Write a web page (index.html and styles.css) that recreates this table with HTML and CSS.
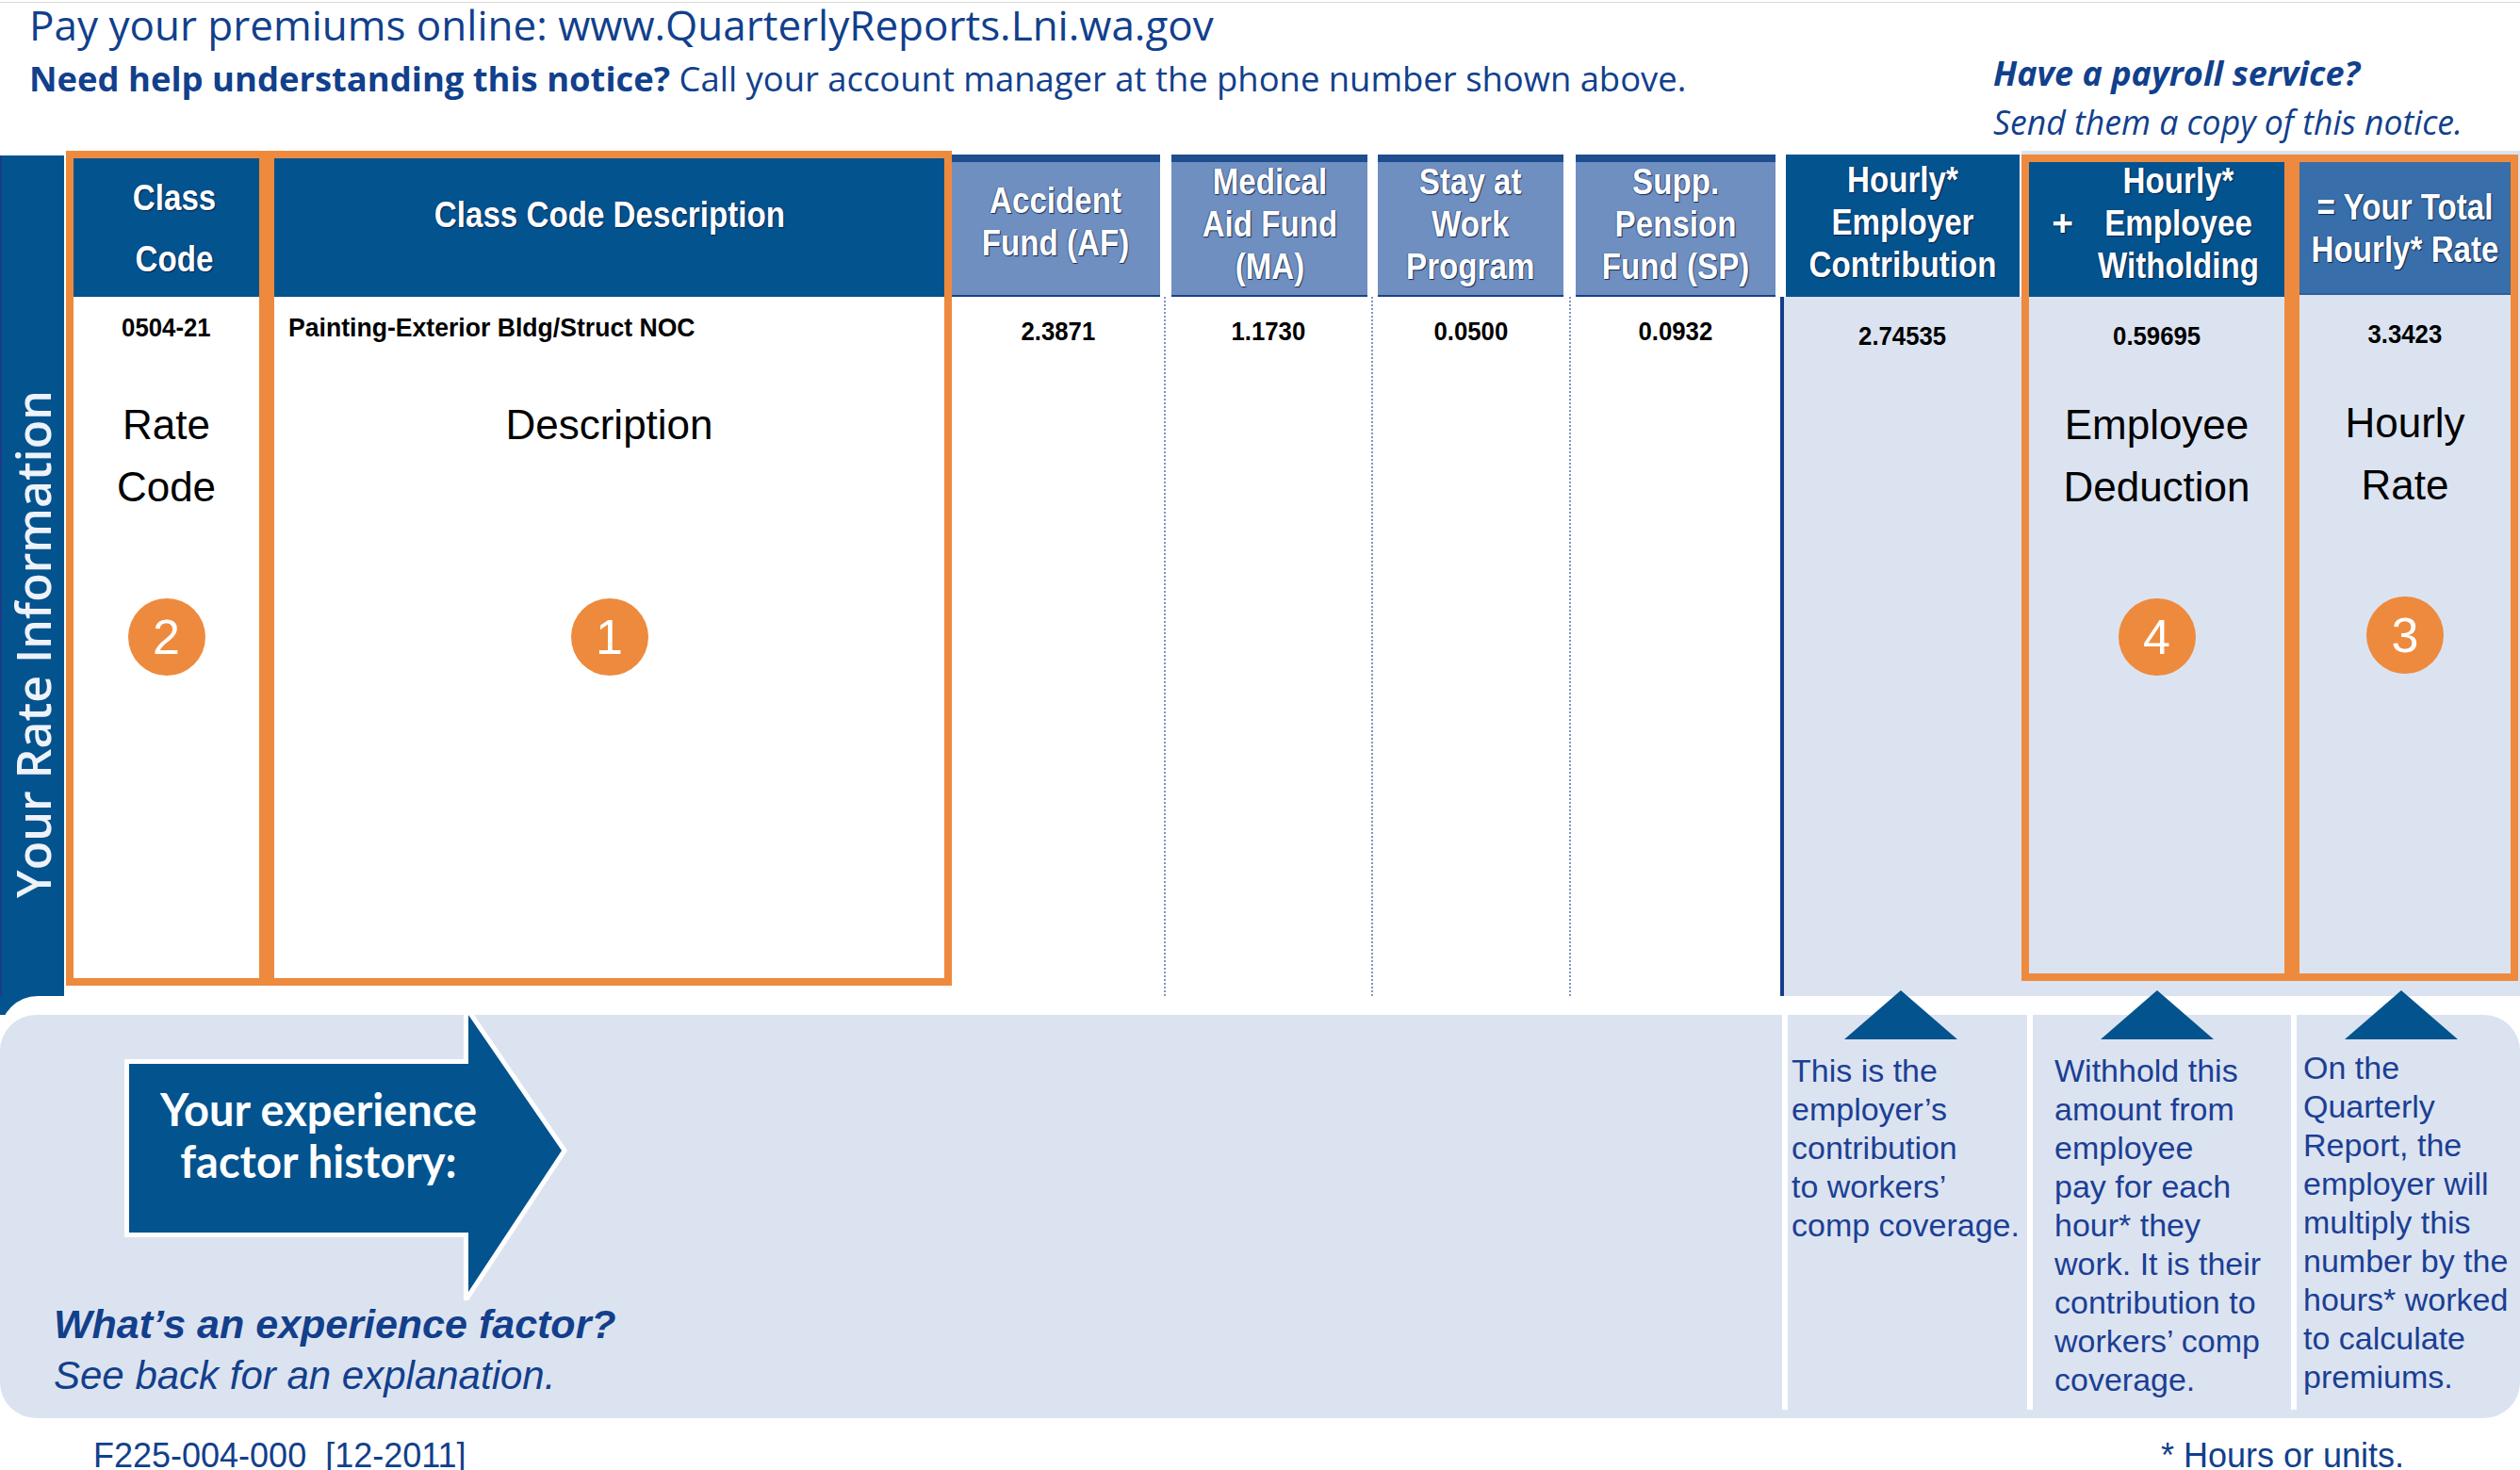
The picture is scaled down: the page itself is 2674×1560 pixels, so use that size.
FILE: index.html
```html
<!DOCTYPE html>
<html lang="en">
<head>
<meta charset="utf-8">
<title>Your Rate Information</title>
<link rel="stylesheet" href="styles.css">
</head>
<body>
<div class="page">
  <div class="rule"></div>
  <header class="top">
    <div class="top-left">
      <p class="pay">Pay your premiums online: www.QuarterlyReports.Lni.wa.gov</p>
      <p class="help"><b>Need help understanding this notice?</b> Call your account manager at the phone number shown above.</p>
    </div>
    <div class="top-right">
      <p class="payroll">Have a payroll service?</p>
      <p class="send">Send them a copy of this notice.</p>
    </div>
  </header>

  <section class="rates">
    <div class="side"><span>Your Rate Information</span></div>

    <div class="obox box-class">
      <div class="hd dark hd-class"><span class="sx">Class<br>Code</span></div>
      <div class="bd">
        <div class="num num-first"><span class="nx">0504-21</span></div>
        <div class="big">Rate<br>Code</div>
        <div class="circle c-class">2</div>
      </div>
    </div>

    <div class="obox box-desc">
      <div class="hd dark hd-desc"><span class="sx">Class Code Description</span></div>
      <div class="bd">
        <div class="num num-first desc-text"><span class="nx">Painting-Exterior Bldg/Struct NOC</span></div>
        <div class="big">Description</div>
        <div class="circle c-desc">1</div>
      </div>
    </div>

    <div class="fund fund-af">
      <div class="hd light hd-af"><span class="sx">Accident<br>Fund (AF)</span></div>
      <div class="fbd dotted"><div class="num"><span class="nx">2.3871</span></div></div>
    </div>
    <div class="fund fund-ma">
      <div class="hd light"><span class="sx">Medical<br>Aid Fund<br>(MA)</span></div>
      <div class="fbd dotted"><div class="num"><span class="nx">1.1730</span></div></div>
    </div>
    <div class="fund fund-sw">
      <div class="hd light"><span class="sx">Stay at<br>Work<br>Program</span></div>
      <div class="fbd dotted"><div class="num"><span class="nx">0.0500</span></div></div>
    </div>
    <div class="fund fund-sp">
      <div class="hd light"><span class="sx">Supp.<br>Pension<br>Fund (SP)</span></div>
      <div class="fbd"><div class="num"><span class="nx">0.0932</span></div></div>
    </div>

    <div class="fund fund-ec">
      <div class="hd dark hd-ec"><span class="sx">Hourly*<br>Employer<br>Contribution</span></div>
      <div class="fbd shaded"><div class="num num-r"><span class="nx">2.74535</span></div></div>
    </div>

    <div class="lcol lcol-ew">
      <div class="obox box-ew">
        <div class="hd dark hd-ew"><span class="plus">+</span><span class="hd-lines"><span class="sx">Hourly*<br>Employee<br>Witholding</span></span></div>
        <div class="bd shaded">
          <div class="num num-r"><span class="nx">0.59695</span></div>
          <div class="big big-r">Employee<br>Deduction</div>
          <div class="circle">4</div>
        </div>
      </div>
    </div>

    <div class="lcol lcol-tot">
      <div class="obox box-tot">
        <div class="hd mid hd-tot"><span class="sx">= Your Total<br>Hourly* Rate</span></div>
        <div class="bd shaded">
          <div class="num num-r"><span class="nx">3.3423</span></div>
          <div class="big big-r">Hourly<br>Rate</div>
          <div class="circle">3</div>
        </div>
      </div>
    </div>
  </section>

  <section class="lower">
    <div class="panel">
      <div class="exp">
        <div class="arrow">
          <svg class="arrow-svg" width="480" height="310" viewBox="0 0 480 310" aria-hidden="true">
            <path d="M11 59 H371 V7 L470 151 L371 301 V238 H11 Z" fill="#03538f" stroke="#ffffff" stroke-width="10" stroke-linejoin="miter" paint-order="stroke"/>
          </svg>
          <p class="arrow-text">Your experience<br>factor history:</p>
        </div>
        <p class="what">What’s an experience factor?</p>
        <p class="see">See back for an explanation.</p>
      </div>
      <div class="note note-a">
        <div class="tri"></div>
        <p>This is the<br>employer’s<br>contribution<br>to workers’<br>comp coverage.</p>
      </div>
      <div class="note note-b">
        <div class="tri"></div>
        <p>Withhold this<br>amount from<br>employee<br>pay for each<br>hour* they<br>work. It is their<br>contribution to<br>workers’ comp<br>coverage.</p>
      </div>
      <div class="note note-c">
        <div class="tri"></div>
        <p>On the<br>Quarterly<br>Report, the<br>employer will<br>multiply this<br>number by the<br>hours* worked<br>to calculate<br>premiums.</p>
      </div>
    </div>
  </section>

  <footer class="foot">
    <span>F225-004-000&nbsp; [12-2011]</span>
    <span>* Hours or units.</span>
  </footer>
</div>
</body>
</html>
```

FILE: styles.css
```css
* { box-sizing: border-box; margin: 0; padding: 0; }
html, body { background: #ffffff; }
body {
  width: 2674px;
  height: 1560px;
  overflow: hidden;
  font-family: "Liberation Sans", Arial, sans-serif;
  color: #123f8c;
}
.page { width: 2674px; }

.rule { height: 1px; margin-top: 2px; background: #d9d9d9; }

/* ---------- top ---------- */
.top {
  height: 157px;
  display: flex;
  justify-content: space-between;
  font-family: "Open Sans", Lato, sans-serif;
  color: #11408c;
}
.top-left { padding-left: 31px; }
.pay { font-size: 44px; line-height: 43px; font-weight: 500; margin-top: 2px; white-space: nowrap; }
.help { font-size: 36.4px; line-height: 36px; margin-top: 17px; white-space: nowrap; }
.help b { font-weight: 700; }
.top-right { width: 559px; }
.payroll { font-style: italic; font-weight: 700; font-size: 36px; line-height: 36px; margin-top: 57px; white-space: nowrap; }
.send { font-style: italic; font-size: 35.6px; line-height: 34px; margin-top: 16px; white-space: nowrap; }

/* ---------- rate table ---------- */
.rates {
  display: grid;
  grid-template-columns: 70px 213px 727px 227px 220px 210px 222px 256px 287px 242px;
  height: 897px;
}
.side {
  margin: 5px 2px 0 0;
  background: #03538f;
  border-left: 2px solid #1b3b86;
  box-shadow: 0 20px 0 #03538f;
  display: flex;
  flex-direction: column;
  justify-content: flex-end;
  align-items: center;
  padding-bottom: 104px;
}
.side span {
  writing-mode: vertical-rl;
  transform: rotate(180deg);
  font-family: "Open Sans", sans-serif;
  font-weight: 600;
  font-size: 50px;
  line-height: 1;
  color: #eef2f9;
  white-space: nowrap;
}

.obox {
  border: 8px solid #ee8a3d;
  display: flex;
  flex-direction: column;
}
.box-class, .box-desc { height: 886px; align-self: start; }

.hd {
  color: #ffffff;
  font-family: "Liberation Sans", Arial, sans-serif;
  font-weight: 700;
  font-size: 39px;
  line-height: 45px;
  text-align: center;
  display: flex;
  align-items: center;
  justify-content: center;
  text-shadow: 1px 1px 1px rgba(0, 25, 70, 0.85), -1px 0 1px rgba(0, 25, 70, 0.4);
  flex: none;
  white-space: nowrap;
}
.sx {
  display: inline-block;
  transform: scaleX(0.85);
  transform-origin: 50% 50%;
  flex: none;
}
.dark { background: #03538f; }
.light {
  background: #6f8fc1;
  border-top: 8px solid #1f4e8f;
  border-bottom: 2px solid #1b4289;
}
.mid { background: #386ea9; border-bottom: 2px solid #2e5f9c; }

.hd-class { height: 147px; line-height: 65px; padding-left: 18px; }
.hd-desc { height: 147px; padding-bottom: 28px; }

.bd { flex: 1; display: flex; flex-direction: column; }

.num {
  font-family: "Liberation Sans", Arial, sans-serif;
  font-weight: 700;
  font-size: 28px;
  line-height: 28px;
  color: #000000;
  text-align: center;
  white-space: nowrap;
}
.nx {
  display: inline-block;
  transform: scaleX(0.92);
  transform-origin: 50% 50%;
}
.num-first { margin-top: 19px; }
.desc-text { text-align: left; padding-left: 15px; }
.desc-text .nx { transform-origin: 0 50%; transform: scaleX(0.95); }
.num-r { margin-top: 28px; }

.big {
  font-family: "Liberation Sans", Arial, sans-serif;
  font-size: 44px;
  line-height: 66px;
  color: #000000;
  text-align: center;
  margin-top: 56px;
  white-space: nowrap;
}
.big-r { margin-top: 47px; }

.circle {
  width: 82px;
  height: 82px;
  border-radius: 50%;
  background: #ee8a3d;
  color: #ffffff;
  font-family: "Liberation Sans", Arial, sans-serif;
  font-size: 52px;
  line-height: 82px;
  text-align: center;
  margin: 85px auto 0;
}
.box-desc .circle { margin-top: 151px; }

/* fund columns */
.fund { display: flex; flex-direction: column; padding-top: 4px; }
.fund .hd { height: 151px; padding-bottom: 10px; }
.fund-af .hd { margin-right: 6px; padding-bottom: 16px; }
.fund-ma .hd { margin: 0 6px; }
.fund-sw .hd { margin: 0 8px 0 5px; }
.fund-sp .hd { margin: 0 5px; }
.fund-ec .hd { margin: 0 2px 0 6px; padding-bottom: 8px; }
.fbd { flex: 1; }
.fbd .num { margin-top: 23px; }
.fbd .num-r { margin-top: 28px; }
.dotted { border-right: 2px dotted #7f96c4; }
.shaded { background: #dce3f0; }
.fund-ec .fbd { border-left: 4px solid #123f8c; }

/* highlighted right columns */
.lcol { background: #dce3f0; padding-top: 4px; }
.box-ew { height: 877px; }
.box-tot { height: 877px; margin-right: 2px; }
.hd-ew { height: 143px; padding-bottom: 14px; justify-content: flex-start; }
.plus { width: 47px; text-align: right; flex: none; }
.hd-lines { flex: 1; display: flex; justify-content: center; }
.hd-tot { height: 141px; }

/* ---------- lower panel ---------- */
.lower {
  position: relative;
  background: #ffffff;
  border-top-left-radius: 40px;
  padding-top: 20px;
}
.panel {
  background: #dce3f0;
  border-radius: 38px;
  height: 428px;
  padding-bottom: 9px;
  display: grid;
  grid-template-columns: 1891px 260px 280px 243px;
}
.exp { display: flex; flex-direction: column; padding-left: 57px; }
.arrow {
  position: relative;
  width: 480px;
  height: 310px;
  margin: -7px 0 0 69px;
}
.arrow-svg { position: absolute; left: 0; top: 0; }
.arrow-text {
  position: relative;
  width: 424px;
  padding-top: 80px;
  text-align: center;
  color: #ffffff;
  font-family: Lato, "Open Sans", sans-serif;
  font-weight: 700;
  font-size: 47px;
  line-height: 55px;
  white-space: nowrap;
}
.what {
  font-style: italic;
  font-weight: 700;
  font-size: 43px;
  line-height: 50px;
  color: #123f8c;
  white-space: nowrap;
}
.see {
  font-style: italic;
  font-size: 42px;
  line-height: 50px;
  margin-top: 5px;
  color: #123f8c;
  white-space: nowrap;
}

.note {
  border-left: 6px solid #ffffff;
  color: #1b3f95;
  font-size: 34px;
  line-height: 41px;
  white-space: nowrap;
}
.tri {
  width: 0;
  height: 0;
  border-left: 60px solid transparent;
  border-right: 60px solid transparent;
  border-bottom: 52px solid #03538f;
  margin-top: -26px;
}
.note p { margin-top: 13px; }
.note-a .tri { margin-left: 60px; }
.note-a p { padding-left: 4px; }
.note-b .tri { margin-left: 72px; }
.note-b p { padding-left: 23px; }
.note-c .tri { margin-left: 51px; }
.note-c p { padding-left: 7px; margin-top: 10px; }

/* ---------- footer ---------- */
.foot {
  display: flex;
  justify-content: space-between;
  padding: 0 123px 0 99px;
  margin-top: 22px;
  font-size: 36px;
  line-height: 36px;
  color: #123f8c;
  white-space: pre;
}
```
